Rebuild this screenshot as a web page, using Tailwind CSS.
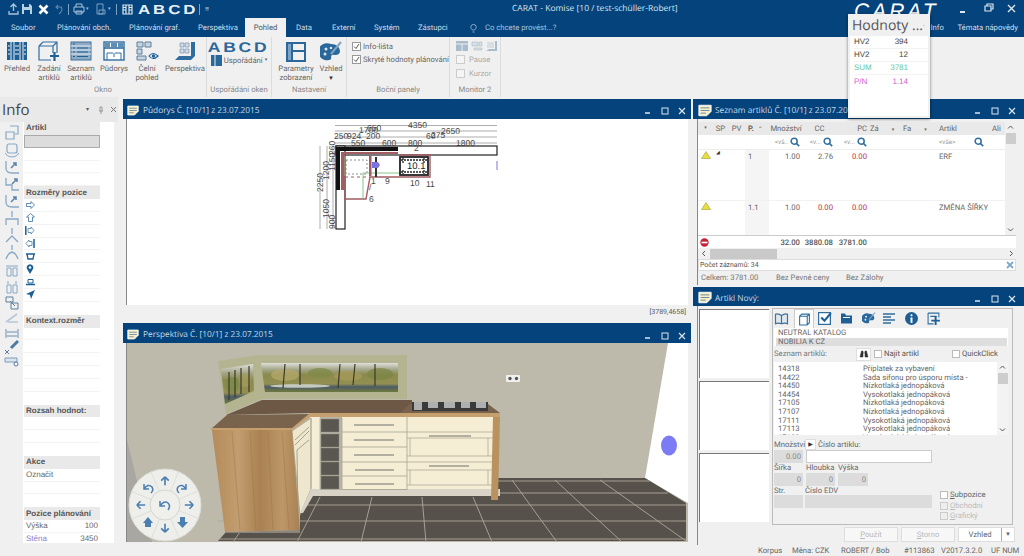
<!DOCTYPE html>
<html lang="en">
<head>
  <meta charset="UTF-8">
  <script src="https://cdn.jsdelivr.net/npm/@tailwindcss/browser@4"></script>
  <title>CARAT - Komise</title>
</head>
<body class="bg-[#f0f0f0] font-['Roboto',sans-serif] text-[#5c5c5c] text-[7.7px] leading-none overflow-hidden [text-rendering:geometricPrecision]">
<svg width="0" height="0" class="absolute">
  <defs>
    <symbol id="arr" viewBox="-6 -6 12 12"><path d="M0 -5 L4.5 -0.5 M0 -5 L-4.5 -0.5 M0 -5 V5" fill="none" stroke="#4b7fb2" stroke-width="2"/></symbol>
    <symbol id="mag" viewBox="0 0 12 12"><circle cx="5" cy="5" r="3.6" fill="none" stroke="#2e6ea3" stroke-width="1.8"/><path d="M7.5 7.5 L11 11" stroke="#2e6ea3" stroke-width="2"/></symbol>
    <symbol id="win" viewBox="0 0 16 14"><path d="M1 1 H15 V8 L10 13 H1Z" fill="#f6efc9" stroke="#fff"/><path d="M3 4 H13 M3 7 H13 M3 10 H9" stroke="#5a7ea0"/></symbol>
    <symbol id="lcurve" viewBox="0 0 16 16"><path d="M2 2 V9 Q2 14 8 14 H15" fill="none" stroke="#8aa8c6" stroke-width="1.3"/><path d="M7 9 L12 4 M9 4 H12 V7" fill="none" stroke="#5d83a8" stroke-width="1.5"/></symbol>
  </defs>
</svg>
<div class="w-[1024px] h-[556px] flex flex-col relative overflow-hidden">

  <!-- title bar -->
  <div class="h-[18px] bg-[#04437b] flex items-center relative text-white">
    <svg width="11" height="12" viewBox="0 0 11 12" class="ml-[8px]"><path d="M5.5 8 V1 M2.5 4 L5.5 1 L8.5 4 M1 8 V11 H10 V8" fill="none" stroke="#a9c4dc" stroke-width="1.3"/></svg>
    <svg width="12" height="12" viewBox="0 0 12 12" class="ml-[2px]"><path d="M1 1 H9 L11 3 V11 H1Z" fill="#b9cfe2"/><path d="M3 1 H8 V4 H3Z M3 7 H9 V11 H3Z" fill="#04437b"/></svg>
    <svg width="11" height="11" viewBox="0 0 11 11" class="ml-[5px]"><path d="M1.5 1.5 L9.5 9.5 M9.5 1.5 L1.5 9.5" stroke="#fff" stroke-width="2.6"/></svg>
    <svg width="9" height="11" viewBox="0 0 9 11" class="ml-[6px]"><path d="M1 3 H6 Q8 5 6 8 L4 10 M3 1 L1 3 L3 5" fill="none" stroke="#5d86ab" stroke-width="1.1"/></svg>
    <div class="w-px h-[11px] bg-[#7fa0bf] ml-[4px]"></div>
    <svg width="12" height="12" viewBox="0 0 12 12" class="ml-[4px]"><path d="M3 4 V1 H9 V4 M1 4 H11 V9 H1Z M3 8 H9 V11 H3Z" fill="none" stroke="#a9c4dc"/></svg>
    <span class="text-[#a9c4dc] text-[5px] ml-[1px] w-[4px]">▾</span>
    <svg width="11" height="12" viewBox="0 0 11 12" class="ml-[5px]"><path d="M2 1 H8 V11 H2Z M4 7 H10 V11 H4Z" fill="none" stroke="#7fa0bf"/></svg>
    <span class="text-[#a9c4dc] text-[5px] ml-[2px] w-[4px]">▾</span>
    <div class="w-px h-[11px] bg-[#7fa0bf] ml-[4px]"></div>
    <svg width="11" height="11" viewBox="0 0 11 11" class="ml-[5px]"><path d="M1 1 H10 V10 H1Z M4 1 V10 M7 1 V10 M1 3.5 H4 M1 6 H4 M7 3.5 H10 M7 6 H10" fill="none" stroke="#dbe6ef" stroke-width="1.2"/></svg>
    <span class="font-['Liberation_Sans',sans-serif] font-bold text-[13px] tracking-[2.2px] text-[#e8f0f6] ml-[5px] scale-x-[1.3] origin-left w-[57px]">ABCD</span>
    <div class="w-px h-[11px] bg-[#7fa0bf] ml-[4px]"></div>
    <span class="text-[#c4d6e6] text-[7px] ml-[5px]">≡</span>
    <span class="absolute left-[512px] top-[5px] font-['Open_Sans',sans-serif] text-[#dbe6ef] text-[8.5px]">CARAT - Komise [10 / test-schüller-Robert]</span>
    <span class="absolute left-[854px] top-[1px] italic font-['Liberation_Sans',sans-serif] text-[21px] tracking-[3px]">CARAT</span>
    <svg width="70" height="14" viewBox="0 0 70 14" class="absolute left-[956px] top-[2px]">
      <path d="M4 10 H9" stroke="#dbe6ef" stroke-width="2"/>
      <path d="M29 4 H35 V9 H29Z M31 4 V2 H37 V7 H35" fill="none" stroke="#dbe6ef" stroke-width="1.2"/>
      <path d="M52 3 L59 10 M59 3 L52 10" stroke="#dbe6ef" stroke-width="1.4"/>
    </svg>
  </div>

  <!-- tabs -->
  <div class="h-[19px] bg-[#04437b] flex items-center text-[#cfdeeb] whitespace-nowrap">
    <span class="ml-[11px] w-[46px]">Soubor</span>
    <span class="w-[72px]">Plánování obch.</span>
    <span class="w-[69px]">Plánování graf.</span>
    <span class="w-[47px]">Perspektiva</span>
    <span class="w-[41px] h-full bg-[#f0f0f0] text-[#555] flex items-center justify-center">Pohled</span>
    <span class="ml-[10px] w-[36px]">Data</span>
    <span class="w-[42px]">Externí</span>
    <span class="w-[44px]">Systém</span>
    <span class="w-[52px]">Zástupci</span>
    <svg width="7" height="10" viewBox="0 0 7 10"><path d="M2.5 7 Q0.5 5.5 0.8 3.5 A2.8 2.8 0 0 1 6.2 3.5 Q6.5 5.5 4.5 7 Z M2.5 9 H4.5" fill="none" stroke="#a9c4dc" stroke-width="0.8"/></svg>
    <span class="ml-[8px] text-[#a9c4dc]">Co chcete provést...?</span>
    <div class="ml-auto mr-[6px] flex items-center">
      <svg width="6" height="4" viewBox="0 0 6 4" class="mr-[2px]"><path d="M0.5 3.5 L3 1 L5.5 3.5" fill="none" stroke="#dbe6ef"/></svg>
      <span class="w-[27px]">Info</span>
      <span>Témata nápovědy</span>
    </div>
  </div>

  <!-- ribbon -->
  <div class="h-[60px] bg-[#f0f0f0] flex relative text-[#666] whitespace-nowrap">
    <!-- Okno -->
    <div class="w-[207px] border-r border-[#dcdcdc] flex flex-col">
      <div class="flex h-[50px] text-center leading-[9px]">
        <div class="w-[34px] flex flex-col items-center pt-[4px]">
          <svg width="22" height="20" viewBox="0 0 22 20"><rect x="1" y="1" width="20" height="18" fill="#1e5f95"/><path d="M5 1 V19 M8 1 V19 M14 1 V19 M17 1 V19" stroke="#f0f0f0"/><path d="M2 5 H4 M2 9 H4 M2 13 H4 M9 5 H13 M9 9 H13 M9 13 H13 M18 5 H20 M18 9 H20 M18 13 H20" stroke="#f0f0f0"/></svg>
          <span class="mt-[3px]">Přehled</span>
        </div>
        <div class="w-[30px] flex flex-col items-center pt-[4px]">
          <svg width="22" height="21" viewBox="0 0 22 21"><path d="M1 5 L5 1 H19 V12 M1 5 V19 H13 M1 5 H15 V12 M15 5 L19 1" fill="none" stroke="#2f6d9f" stroke-width="1.2"/><path d="M12 15 H21 M16.5 11 V20" stroke="#1e5f95" stroke-width="2.2"/></svg>
          <span class="mt-[2px]">Zadání<br>artiklů</span>
        </div>
        <div class="w-[34px] flex flex-col items-center pt-[4px]">
          <svg width="22" height="20" viewBox="0 0 22 20"><rect x="1" y="1" width="20" height="18" fill="#8eabc4" stroke="#3f7199"/><path d="M1 5 H21 M1 9 H21 M1 13 H21" stroke="#e6edf2"/><path d="M3 3 H5 M3 7 H5 M3 11 H5 M3 15.5 H5 M7 7 H18 M7 11 H18 M7 15.5 H18" stroke="#1e5f95"/></svg>
          <span class="mt-[3px]">Seznam<br>artiklů</span>
        </div>
        <div class="w-[32px] flex flex-col items-center pt-[4px]">
          <svg width="22" height="20" viewBox="0 0 22 20"><rect x="1" y="1" width="20" height="18" fill="#fff" stroke="#2f6d9f" stroke-width="1.4"/><path d="M1 7 H21" stroke="#2f6d9f" stroke-width="1.6"/><path d="M2 2 H7 V6 H2Z M8 2 H14 V6 H8Z M15 2 H20 V6 H15Z" fill="#5d8fb7"/><path d="M4 19 V12 H10 M18 19 V12 H12 M11 12 V16" stroke="#2f6d9f" fill="none"/></svg>
          <span class="mt-[3px]">Půdorys</span>
        </div>
        <div class="w-[34px] flex flex-col items-center pt-[4px]">
          <svg width="24" height="20" viewBox="0 0 24 20"><path d="M2 1 H8 V6 H2Z M10 1 H16 V6 H10Z M2 8 H7 V13 H2Z M2 15 H11 V19 H2Z" fill="#c7d5e0" stroke="#5c7e9c"/><path d="M14 15 Q18 10 23 15 Q18 20 14 15Z" fill="#fff" stroke="#1e5f95" stroke-width="1.2"/><circle cx="18.5" cy="15" r="1.8" fill="#1e5f95"/></svg>
          <span class="mt-[3px]">Čelní<br>pohled</span>
        </div>
        <div class="flex-1 flex flex-col items-center pt-[4px]">
          <svg width="22" height="21" viewBox="0 0 22 21"><path d="M1 19 L5 15 H17 V1 H21 V15 L17 19Z" fill="#2f6d9f"/><path d="M6 2 H10 V6 H6Z M11 2 H15 V6 H11Z M6 8 H10 V12 H6Z M11 8 H15 V12 H11Z" fill="#cfdbe5" stroke="#6b8aa6" stroke-width="0.6"/></svg>
          <span class="mt-[2px]">Perspektiva</span>
        </div>
      </div>
      <div class="text-center text-[#888] -mt-[1px]">Okno</div>
    </div>
    <!-- Uspořádání oken -->
    <div class="w-[65px] border-r border-[#dcdcdc] flex flex-col items-center">
      <div class="h-[50px] w-full flex flex-col items-center">
        <div class="font-['Liberation_Sans',sans-serif] font-bold text-[14px] tracking-[2.2px] text-[#2a679a] mt-[3px] scale-x-[1.25]">ABCD</div>
        <div class="flex items-center gap-[2px] mt-[1px]">
          <svg width="11" height="11" viewBox="0 0 11 11"><path d="M0 0 H11 V11 H0Z" fill="#2a679a"/><path d="M4 0 V11" stroke="#f0f0f0"/></svg>
          <span>Uspořádání</span><span class="text-[5px]">▾</span>
        </div>
      </div>
      <div class="text-[#888] -mt-[1px]">Uspořádání oken</div>
    </div>
    <!-- Nastaveni -->
    <div class="w-[75px] border-r border-[#dcdcdc] flex flex-col">
      <div class="flex h-[50px] text-center leading-[9px]">
        <div class="w-[46px] flex flex-col items-center pt-[4px] ml-[1px]">
          <svg width="22" height="22" viewBox="0 0 22 22"><rect x="1" y="1" width="20" height="20" fill="#2a679a"/><path d="M8 3 H19 V9 H8Z M8 11 H19 V19 H8Z" fill="#f0f0f0"/><path d="M3 3 H6 V19 H3Z" fill="#7da4c4"/></svg>
          <span class="mt-[1px]">Parametry<br>zobrazení</span>
        </div>
        <div class="w-[24px] flex flex-col items-center pt-[4px]">
          <svg width="22" height="22" viewBox="0 0 22 22"><path d="M11 3 A9 8.5 0 1 0 9 19 Q12 19 11 16 Q11 13 15 14 Q20 14 20 10 Q19 3 11 3Z" fill="#2a679a"/><circle cx="6" cy="8" r="1.5" fill="#d9e4ec"/><circle cx="5" cy="13" r="1.5" fill="#d9e4ec"/><circle cx="11" cy="7" r="1.3" fill="#d9e4ec"/><path d="M11 13 L21 1" stroke="#7da4c4" stroke-width="2"/></svg>
          <span class="mt-[1px]">Vzhled</span>
          <span class="text-[6px] text-[#333] mt-[1px]">▼</span>
        </div>
      </div>
      <div class="text-center text-[#888] -mt-[1px]">Nastavení</div>
    </div>
    <!-- Bocni panely -->
    <div class="w-[103px] border-r border-[#dcdcdc] flex flex-col">
      <div class="h-[50px] pl-[5px] pt-[5px] flex flex-col gap-[4px]">
        <div class="flex items-center gap-[1px]">
          <div class="w-[9px] h-[9px] bg-white border border-[#999] flex items-center justify-center"><svg width="7" height="7" viewBox="0 0 7 7"><path d="M1 3.5 L3 5.5 L6 1" fill="none" stroke="#555"/></svg></div>
          <span class="ml-[1px]">Info-lišta</span>
        </div>
        <div class="flex items-center gap-[1px]">
          <div class="w-[9px] h-[9px] bg-white border border-[#999] flex items-center justify-center"><svg width="7" height="7" viewBox="0 0 7 7"><path d="M1 3.5 L3 5.5 L6 1" fill="none" stroke="#555"/></svg></div>
          <span class="ml-[1px]">Skryté hodnoty plánování</span>
        </div>
      </div>
      <div class="text-center text-[#888] -mt-[1px]">Boční panely</div>
    </div>
    <!-- Monitor 2 -->
    <div class="w-[51px] border-r border-[#dcdcdc] flex flex-col">
      <div class="h-[50px] pl-[6px] pt-[4px]">
        <div class="flex gap-[3px]">
          <svg width="12" height="10" viewBox="0 0 12 10"><rect width="12" height="10" fill="#a9bccb"/><path d="M0 3 H12 M6 3 V10" stroke="#eee"/></svg>
          <svg width="12" height="10" viewBox="0 0 12 10"><path d="M1 1 H7 V5 H1Z M8 1 H11 V5 H8Z M3 7 H11 V9 H3Z" fill="#d7dfe5" stroke="#a9bccb" stroke-width="0.6"/></svg>
          <svg width="12" height="10" viewBox="0 0 12 10"><path d="M11 0 V10 H0 L3 8 H9 V0Z" fill="#a9bccb"/><path d="M1 1 H8 V7 H1Z" fill="#d7dfe5"/></svg>
        </div>
        <div class="flex items-center gap-[4px] mt-[4px] text-[#aaa]"><div class="w-[9px] h-[9px] bg-[#f5f5f5] border border-[#ccc]"></div>Pause</div>
        <div class="flex items-center gap-[4px] mt-[5px] text-[#aaa]"><div class="w-[9px] h-[9px] bg-[#f5f5f5] border border-[#ccc]"></div>Kurzor</div>
      </div>
      <div class="text-center text-[#888] -mt-[1px]">Monitor 2</div>
    </div>
  </div>

  <!-- workspace -->
  <div class="h-[448px] flex bg-[#f0f0f0]">

    <!-- info panel -->
    <div class="w-[122px] flex flex-col shrink-0">
      <div class="h-[25px] flex items-center pl-[2px] bg-[#e9e9e9] mr-[4px]">
        <span class="text-[15px] text-[#444] font-['Open_Sans',sans-serif] mt-[1px] w-[84px]">Info</span>
        <span class="text-[6px] w-[12px]">▾</span>
        <svg width="6" height="8" viewBox="0 0 6 8" class="mr-[6px]"><path d="M3 8 V5 M1 5 H5 M2 5 V1 H4 V5" fill="none" stroke="#888" stroke-width="0.8"/></svg>
        <svg width="7" height="7" viewBox="0 0 7 7"><path d="M1 1 L6 6 M6 1 L1 6" stroke="#777"/></svg>
      </div>
      <div class="flex h-[421px] overflow-hidden">
        <div class="w-[23px] flex flex-col items-center gap-[1px] pt-[3px] shrink-0">
          <svg width="16" height="16" viewBox="0 0 16 16"><path d="M6 1 H14 V9 H11 M2 7 H10 V14 H2Z" fill="none" stroke="#8aa8c6" stroke-width="1.2"/></svg>
          <svg width="16" height="16" viewBox="0 0 16 16"><rect x="3" y="2" width="10" height="9" rx="2" fill="none" stroke="#8aa8c6" stroke-width="1.2"/><path d="M1 11 Q3 15 8 15 Q13 15 15 11" fill="none" stroke="#8aa8c6"/></svg>
          <svg width="16" height="16"><use href="#lcurve"/></svg>
          <svg width="16" height="16" viewBox="0 0 16 16"><path d="M2 2 V9 H8 V14 H15" fill="none" stroke="#8aa8c6" stroke-width="1.3"/><path d="M8 8 L13 3 M10 3 H13 V6" fill="none" stroke="#5d83a8" stroke-width="1.5"/></svg>
          <svg width="16" height="16"><use href="#lcurve"/></svg>
          <svg width="16" height="16" viewBox="0 0 16 16"><path d="M8 1 V7 M2 15 V9 H14 V15" fill="none" stroke="#8aa8c6" stroke-width="1.3"/></svg>
          <svg width="16" height="16" viewBox="0 0 16 16"><path d="M8 1 V7 M2 15 L8 9 L14 15" fill="none" stroke="#8aa8c6" stroke-width="1.3"/></svg>
          <svg width="16" height="16" viewBox="0 0 16 16"><path d="M8 1 V6 M2 15 Q4 9 8 8 Q12 9 14 15" fill="none" stroke="#8aa8c6" stroke-width="1.3"/></svg>
          <svg width="16" height="16" viewBox="0 0 16 16"><path d="M2 5 H14 M3 7 H7 V15 H3Z M9 7 H13 V15 H9Z" fill="none" stroke="#8aa8c6"/></svg>
          <svg width="16" height="16" viewBox="0 0 16 16"><path d="M4 3 V6 M12 3 V6 M3 7 H7 V15 H3Z M9 7 H13 V15 H9Z" fill="none" stroke="#8aa8c6"/></svg>
          <svg width="16" height="16" viewBox="0 0 16 16"><path d="M2 2 H9 V7 H2Z M7 8 H14 V14 H7Z M6 6 L11 11" fill="none" stroke="#5c7e9c"/></svg>
          <svg width="16" height="14" viewBox="0 0 16 14"><path d="M2 10 L13 2 M4 10 H14" fill="none" stroke="#b7c7d6" stroke-width="1.6"/></svg>
          <svg width="16" height="12" viewBox="0 0 16 12"><path d="M2 2 V11 M14 2 V11 M3 5 H13 M3 9 H13" fill="none" stroke="#6a8eb0"/></svg>
          <svg width="16" height="16" viewBox="0 0 16 16" class="-mt-[1px]"><path d="M1 11 L5 15 M5 11 L1 15" stroke="#5c7e9c"/><path d="M7 9 L14 2" stroke="#4e7ba5" stroke-width="3"/></svg>
          <svg width="16" height="12" viewBox="0 0 16 12"><path d="M1 2 H13 V6 H1Z" fill="#dce5ec" stroke="#7d9cbc"/><circle cx="12" cy="8" r="2" fill="#fff" stroke="#4e7ba5"/></svg>
        </div>
        <div class="w-[91px] bg-white text-[#666] font-['Liberation_Sans',sans-serif] text-[8px]">
          <div class="w-[76px] ml-[1px]">
            <div class="h-[12.85px] bg-[#e9e9e9] font-bold flex items-center pl-[2px] text-[#555]">Artikl</div>
            <div class="h-[12.85px] bg-[#dcdcdc] border border-[#aaa]"></div>
            <div class="h-[12.85px] border-b border-[#f3f3f3]"></div>
            <div class="h-[12.85px] border-b border-[#f3f3f3]"></div>
            <div class="h-[12.85px] border-b border-[#f3f3f3]"></div>
            <div class="h-[12.85px] bg-[#e9e9e9] font-bold flex items-center pl-[2px] text-[#555]">Rozměry pozice</div>
            <div class="h-[12.85px] border-b border-[#f3f3f3] flex items-center pl-[2px]"><svg width="9" height="8" viewBox="0 0 9 8"><path d="M0.5 2.5 H5 V0.5 L8.5 4 L5 7.5 V5.5 H0.5Z" fill="#fff" stroke="#3b6f9e" stroke-width="0.8"/></svg></div>
            <div class="h-[12.85px] border-b border-[#f3f3f3] flex items-center pl-[2px]"><svg width="9" height="9" viewBox="0 0 9 9"><path d="M2.5 8.5 V4 H0.5 L4.5 0.5 L8.5 4 H6.5 V8.5Z" fill="#fff" stroke="#3b6f9e" stroke-width="0.8"/></svg></div>
            <div class="h-[12.85px] border-b border-[#f3f3f3] flex items-center pl-[1px]"><svg width="10" height="9" viewBox="0 0 10 9"><path d="M0.8 0 V9" stroke="#1e5f95" stroke-width="1.5"/><path d="M3 2.5 H6 V1 L9 4.5 L6 8 V6.5 H3Z" fill="#fff" stroke="#3b6f9e" stroke-width="0.7"/></svg></div>
            <div class="h-[12.85px] border-b border-[#f3f3f3] flex items-center pl-[1px]"><svg width="10" height="9" viewBox="0 0 10 9"><path d="M9 0 V9" stroke="#1e5f95" stroke-width="1.5"/><path d="M7 2.5 H4 V1 L1 4.5 L4 8 V6.5 H7Z" fill="#fff" stroke="#3b6f9e" stroke-width="0.7"/></svg></div>
            <div class="h-[12.85px] border-b border-[#f3f3f3] flex items-center pl-[2px]"><svg width="9" height="7" viewBox="0 0 9 7"><path d="M0 1 H9 M1 1 L2 6 H7 L8 1" fill="none" stroke="#1e5f95" stroke-width="1.3"/></svg></div>
            <div class="h-[12.85px] border-b border-[#f3f3f3] flex items-center pl-[2px]"><svg width="8" height="10" viewBox="0 0 8 10"><path d="M4 10 L1 5 A3.3 3.3 0 1 1 7 5Z" fill="#1e5f95"/><circle cx="4" cy="3.5" r="1.3" fill="#fff"/></svg></div>
            <div class="h-[12.85px] border-b border-[#f3f3f3] flex items-center pl-[2px]"><svg width="9" height="7" viewBox="0 0 9 7"><path d="M2 0.5 H7 V4 H2Z" fill="none" stroke="#1e5f95"/><path d="M0 5.5 H9" stroke="#1e5f95" stroke-width="1.5"/></svg></div>
            <div class="h-[12.85px] border-b border-[#f3f3f3] flex items-center pl-[2px]"><svg width="9" height="9" viewBox="0 0 9 9"><path d="M9 0 L0 4 L4 5 L5 9Z" fill="#1e5f95"/></svg></div>
            <div class="h-[12.85px]"></div>
            <div class="h-[12.85px] bg-[#e9e9e9] font-bold flex items-center pl-[2px] text-[#555]">Kontext.rozměr</div>
            <div class="h-[12.85px] border-b border-[#f3f3f3]"></div><div class="h-[12.85px] border-b border-[#f3f3f3]"></div><div class="h-[12.85px] border-b border-[#f3f3f3]"></div><div class="h-[12.85px] border-b border-[#f3f3f3]"></div><div class="h-[12.85px] border-b border-[#f3f3f3]"></div><div class="h-[12.85px]"></div>
            <div class="h-[12.85px] bg-[#e9e9e9] font-bold flex items-center pl-[2px] text-[#555]">Rozsah hodnot:</div>
            <div class="h-[12.85px] border-b border-[#f3f3f3]"></div><div class="h-[12.85px] border-b border-[#f3f3f3]"></div><div class="h-[12.85px]"></div>
            <div class="h-[12.85px] bg-[#e9e9e9] font-bold flex items-center pl-[2px] text-[#555]">Akce</div>
            <div class="h-[12.85px] border-b border-[#f3f3f3] flex items-center pl-[2px]">Označit</div>
            <div class="h-[12.85px] border-b border-[#f3f3f3]"></div><div class="h-[12.85px]"></div>
            <div class="h-[12.85px] bg-[#e9e9e9] font-bold flex items-center pl-[2px] text-[#555]">Pozice plánování</div>
            <div class="h-[12.85px] border-b border-[#f3f3f3] flex items-center justify-between px-[2px]"><span>Výška</span><span>100</span></div>
            <div class="h-[12.85px] flex items-center justify-between px-[2px]"><span class="text-[#8a80c8]">Stěna</span><span>3450</span></div>
          </div>
        </div>
      </div>
    </div>

    <!-- middle windows -->
    <div class="w-[568px] ml-[1px] flex flex-col pt-[2px] shrink-0">
      <div class="h-[221px] flex flex-col">
        <div class="h-[20px] bg-[#04437b] flex items-center text-[#c6d8e7] pl-[4px] font-['Open_Sans',sans-serif] text-[8.3px]">
          <svg width="12" height="11" class="mt-[3px]"><use href="#win"/></svg>
          <span class="ml-[4px] pt-[4px]">Půdorys Č. [10/1] z 23.07.2015</span>
          <div class="ml-auto flex items-center gap-[9px] pr-[5px] pt-[4px]">
            <svg width="8" height="8" viewBox="0 0 8 8"><path d="M1 6 H6" stroke="#dbe6ef" stroke-width="1.5"/></svg>
            <svg width="8" height="8" viewBox="0 0 8 8"><rect x="1" y="1" width="6" height="6" fill="none" stroke="#dbe6ef"/></svg>
            <svg width="8" height="8" viewBox="0 0 8 8"><path d="M1 1 L7 7 M7 1 L1 7" stroke="#dbe6ef" stroke-width="1.2"/></svg>
          </div>
        </div>
        <div class="flex-1 pl-[3px] pr-[3px] flex flex-col">
          <div class="h-[186px] bg-white border-l border-[#888] relative overflow-hidden">
            <svg class="absolute left-0 top-0" width="561" height="186" viewBox="127 119 561 186" font-family="Liberation Sans, sans-serif" font-size="8.5" fill="#444">
              <path d="M335 125.5 H497 M335 131 H497 M335 137 H497 M335 143 H497" stroke="#777" stroke-width="0.6"/>
              <g>
                <text x="408" y="128">4350</text><text x="359" y="133">1700</text><text x="367" y="131">650</text><text x="441" y="134">2650</text>
                <text x="334" y="139">250</text><text x="347" y="139">924</text><text x="366" y="139">200</text><text x="426" y="139">60</text><text x="431" y="138">275</text>
                <text x="351" y="146">550</text><text x="382" y="146">600</text><text x="408" y="146">800</text><text x="456" y="146">1800</text>
              </g>
              <path d="M320 146 V229 M327 146 V229 M333 146 V229" stroke="#777" stroke-width="0.6"/>
              <text transform="translate(323 192) rotate(-90)">2250</text>
              <text transform="translate(329 180) rotate(-90)">1200</text>
              <text transform="translate(335 171) rotate(-90)">1150</text>
              <text transform="translate(335 155) rotate(-90)">260</text>
              <text transform="translate(329 218) rotate(-90)">1050</text>
              <text transform="translate(335 229) rotate(-90)">900</text>
              <rect x="336" y="146" width="161" height="9" fill="#fff" stroke="#222" stroke-width="1.2"/>
              <rect x="336" y="146" width="9" height="83" fill="#fff" stroke="#222" stroke-width="1.2"/>
              <rect x="336" y="147" width="62" height="4" fill="#111"/>
              <rect x="336" y="147" width="4" height="43" fill="#111"/>
              <rect x="341" y="152" width="3.500" height="38" fill="#a25c62"/>
              <path d="M345 153 H398" stroke="#a25c62" stroke-width="2"/>
              <path d="M345 153 V199 H366 L370 177 H430 V155 H400" fill="none" stroke="#a25c62" stroke-width="1.4"/>
              <path d="M345 177 H370" stroke="#a25c62" stroke-dasharray="3 3"/>
              <rect x="346" y="160" width="21" height="14" fill="none" stroke="#444" stroke-width="0.6" stroke-dasharray="2 2"/>
              <path d="M345 156 V176 M363 198 V173 H428" fill="none" stroke="#7ac07a" stroke-width="0.9"/>
              <rect x="369" y="156" width="2.500" height="20" fill="#a25c62"/>
              <rect x="375" y="157" width="2" height="20" fill="#333"/>
              <path d="M372 162 H378 L380 165 L378 168 H372Z" fill="#7a74e0"/>
              <rect x="400" y="157" width="28" height="18" fill="#fff" stroke="#222" stroke-width="1.800"/>
              <path d="M401 160 H427 M401 172 H427 M403 158 V163 M424 158 V163 M403 170 V174 M424 170 V174" stroke="#222" fill="none" stroke-width="1.300" stroke-dasharray="2 1"/>
              <text x="407" y="168.500" font-size="9.500" fill="#222">10.1</text>
              <text x="371" y="184">1</text><text x="385" y="184">9</text><text x="410" y="186">10</text><text x="426" y="187">11</text><text x="369" y="202">6</text><text x="414" y="151">2</text><text x="369" y="190">/</text>
              <path d="M497 161 V170" stroke="#7a74e0"/>
            </svg>
          </div>
          <div class="h-[15px] flex items-center justify-end pr-[2px] text-[7px]">[3789,4658]</div>
        </div>
      </div>

      <div class="h-[222px] mt-[3px] flex flex-col">
        <div class="h-[20px] bg-[#04437b] flex items-center text-[#c6d8e7] pl-[4px] font-['Open_Sans',sans-serif] text-[8.3px]">
          <svg width="12" height="11" class="mt-[3px]"><use href="#win"/></svg>
          <span class="ml-[4px] pt-[5px]">Perspektiva Č. [10/1] z 23.07.2015</span>
          <div class="ml-auto flex items-center gap-[9px] pr-[5px] pt-[5px]">
            <svg width="8" height="8" viewBox="0 0 8 8"><path d="M1 6 H6" stroke="#dbe6ef" stroke-width="1.5"/></svg>
            <svg width="8" height="8" viewBox="0 0 8 8"><rect x="1" y="1" width="6" height="6" fill="none" stroke="#dbe6ef"/></svg>
            <svg width="8" height="8" viewBox="0 0 8 8"><path d="M1 1 L7 7 M7 1 L1 7" stroke="#dbe6ef" stroke-width="1.2"/></svg>
          </div>
        </div>
        <div class="pl-[3px] pr-[3px]">
          <div class="h-[199px] border-l border-[#888] relative overflow-hidden">
            <svg class="absolute left-0 top-0" width="561" height="199" viewBox="127 343 561 199">
              <defs>
                <linearGradient id="oak" x1="0" x2="1" y1="0" y2="0"><stop offset="0" stop-color="#b48b5b"/><stop offset="0.3" stop-color="#c29d6f"/><stop offset="0.55" stop-color="#a98152"/><stop offset="0.8" stop-color="#bd9768"/><stop offset="1" stop-color="#a88052"/></linearGradient>
                <linearGradient id="pic" x1="0" x2="0" y1="0" y2="1"><stop offset="0" stop-color="#dedfd8"/><stop offset="0.22" stop-color="#a5a78c"/><stop offset="0.4" stop-color="#8a8a4c"/><stop offset="0.72" stop-color="#938f52"/><stop offset="0.82" stop-color="#4c5b66"/><stop offset="1" stop-color="#6f7a3c"/></linearGradient>
              </defs>
              <rect x="127" y="343" width="561" height="199" fill="#bdb9ab"/>
              <path d="M668 343 H688 V503 L645 478Z" fill="#fff"/>
              <path d="M127 440 L152 542 H127Z" fill="#a9a7a1"/>
              <path d="M300 478 H645 L686 503 V541 H218 L226 532 H300Z" fill="#56514a"/>
              <path d="M300 481 H650 M300 493 H668 M300 505 H686 M218 521 H686 M218 539 H686" stroke="#aea89c" stroke-width="0.9"/>
              <path d="M512 480 L557 542 M555 480 L622 542 M600 480 L686 541 M473 497 L492 542 M422 497 L426 542 M372 497 L361 542 M320 497 L297 542 M240 532 L233 542" stroke="#aea89c" stroke-width="0.9"/>
              <!-- backsplash -->
              <path d="M218 361 L260 355 H407 V399 H262 L226 414 Z" fill="#b4b590"/>
              <path d="M221 369 L253 364 L254 391 L225 404Z" fill="url(#pic)"/>
              <path d="M261 363 H398 V392 H265Z" fill="url(#pic)"/>
              <g opacity="0.75">
                <ellipse cx="285" cy="375" rx="14" ry="6" fill="#b5a86a"/><ellipse cx="320" cy="373" rx="12" ry="5" fill="#7e8a46"/><ellipse cx="348" cy="376" rx="14" ry="5" fill="#a89a5c"/><ellipse cx="380" cy="374" rx="13" ry="6" fill="#7c8644"/>
                <ellipse cx="300" cy="386" rx="30" ry="1.800" fill="#e6e8e2"/><ellipse cx="232" cy="385" rx="7" ry="8" fill="#7b8a4a"/><ellipse cx="245" cy="380" rx="6" ry="7" fill="#a59c60"/>
              </g>
              <path d="M229 372 V400 M235 370 V397 M241 368 V394 M249 366 V392 M285 364 L283 388 M300 364 V385 M340 364 L338 388 M355 364 L353 385 M375 364 V386" stroke="#3d3a27" stroke-width="1.200"/>
              <!-- counters -->
              <path d="M226 415 L262 400 H412 V413 H310 L226 415Z" fill="#6c5845"/>
              <path d="M211 429 L227 415 L310 414 L292 429Z" fill="#7a634c"/>
              <path d="M310 413 H500 V417 H310 L292 430 H211 V428 H292Z" fill="#c5a06e"/>
              <!-- cabinets -->
              <rect x="310" y="417" width="183" height="73" fill="#f6eed4"/>
              <path d="M292 431 L311 418 V489 L300 515Z" fill="#efe7cd" stroke="#9d9a88" stroke-width="0.7"/>
              <path d="M295 440 L309 427 M295 445 L309 431 M297 450 L309 440 M298 515 L297 450" stroke="#9d9a88" fill="none" stroke-width="0.9"/>
              <path d="M311 489 H500 V496 H313 L303 513 H300Z" fill="#d8d3c6"/>
              <path d="M311 418 V489 M320 418 V489" stroke="#a5a292" stroke-width="0.7"/>
              <rect x="320" y="417" width="22" height="73" fill="#b9b6a8"/>
              <g fill="#5a5751" stroke="#8d8a7d" stroke-width="0.500">
                <rect x="321" y="419" width="18" height="13"/><rect x="321" y="434" width="18" height="13"/><rect x="321" y="448" width="18" height="13"/><rect x="321" y="462" width="18" height="13"/><rect x="321" y="476" width="18" height="13"/>
              </g>
              <path d="M342 418 V489 M407 417 V490 M342 432 H407 M342 447 H407 M342 462 H407 M342 476 H407 M342 489.500 H407" stroke="#a5a292" stroke-width="0.800"/>
              <path d="M354 425 H394 M354 440 H394 M354 455 H394 M355 470 H394 M355 484 H394" stroke="#9c9a8e" stroke-width="1.400"/>
              <path d="M407 432 H493 M407 438 H493 M407 456 H493 M407 462 H493 M407 470 H493 M407 485 H493 M410 438 V456 M488 438 V456 M410 470 V485 M488 470 V485" stroke="#a5a292" stroke-width="0.700"/>
              <path d="M429 436 H471 M429 466 H469" stroke="#9c9a8e" stroke-width="1.400"/>
              <path d="M493 417 H500 L498 500 L491 500Z" fill="#b9925f"/>
              <path d="M410 404 H488 L500 413 H400Z" fill="#7a634c"/>
              <rect x="412" y="402" width="76" height="9" fill="#3a3a3a"/>
              <path d="M414 402 H422 V410 H414Z M428 402 H438 V408 H428Z M444 402 H455 V408 H444Z M461 402 H470 V408 H461Z M476 402 H486 V408 H476Z" fill="#aeb0b0"/>
              <!-- oak side panel -->
              <path d="M212 430 H292 L300 530 L225 532Z" fill="url(#oak)"/>
              <path d="M232 431 L240 530 M250 431 L256 531 M268 431 L273 530 M282 431 L289 530" stroke="#9a7448" stroke-width="0.600" opacity="0.700"/>
              <path d="M225 532 L300 530 L300 533 H226Z" fill="#8b8478"/>
              <!-- socket -->
              <rect x="506" y="375" width="14" height="7" rx="1" fill="#f0f0ee"/>
              <circle cx="510" cy="378.500" r="1.700" fill="#555"/><circle cx="516.500" cy="378.500" r="1.700" fill="#555"/>
              <ellipse cx="669" cy="445.500" rx="8" ry="10" fill="#7b7bf5"/>
              <!-- wheel -->
              <circle cx="165" cy="505" r="36" fill="#eeeeea" stroke="#dcdcd8"/>
              <circle cx="165" cy="505" r="15" fill="#efefeb" stroke="#d4d4d0"/>
              <path d="M165 469 V490 M165 520 V541 M129 505 H150 M180 505 H201 M140 480 L154 494 M176 516 L190 530 M190 480 L176 494 M154 516 L140 530" stroke="#d9d9d5" stroke-width="0.700" transform="rotate(22 165 505)"/>
              <use href="#arr" x="160" y="476" width="10" height="10"/>
              <use href="#arr" x="0" y="0" width="10" height="10" transform="translate(170 533) rotate(180)"/>
              <use href="#arr" x="0" y="0" width="10" height="10" transform="translate(136 510) rotate(-90)"/>
              <use href="#arr" x="0" y="0" width="10" height="10" transform="translate(194 500) rotate(90)"/>
              <path d="M144 484 V489 H149 M144 489 Q148 483 152 487 Q154 490 151 493" fill="none" stroke="#4b7fb2" stroke-width="1.500"/>
              <path d="M186 484 V489 H181 M186 489 Q182 483 178 487 Q176 490 179 493" fill="none" stroke="#4b7fb2" stroke-width="1.500"/>
              <path d="M160 501 V506 H165 M160 506 Q164 500 168 503 Q171 506 168 510" fill="none" stroke="#4b7fb2" stroke-width="1.500"/>
              <path d="M145 527 V523 H143 L148 517 L153 523 H151 V527Z" fill="#4b7fb2"/>
              <path d="M180 517 H185 V522 H188 L182.500 528 L177 522 H180Z" fill="#4b7fb2"/>
            </svg>
          </div>
        </div>
      </div>
    </div>

    <!-- right windows -->
    <div class="w-[331px] ml-[2px] flex flex-col pt-[2px]">
      <div class="h-[186px] flex flex-col">
        <div class="h-[20px] bg-[#04437b] flex items-center text-[#c6d8e7] pl-[5px] font-['Open_Sans',sans-serif] text-[8.3px]">
          <svg width="14" height="13" class="mt-[3px]"><use href="#win"/></svg>
          <span class="ml-[3px] pt-[4px]">Seznam artiklů Č. [10/1] z 23.07.2015</span>
          <div class="ml-auto flex items-center gap-[9px] pr-[8px] pt-[4px]">
            <svg width="8" height="8" viewBox="0 0 8 8"><path d="M1 6 H6" stroke="#dbe6ef" stroke-width="1.5"/></svg>
            <svg width="8" height="8" viewBox="0 0 8 8"><rect x="1" y="1" width="6" height="6" fill="none" stroke="#dbe6ef"/></svg>
            <svg width="8" height="8" viewBox="0 0 8 8"><path d="M1 1 L7 7 M7 1 L1 7" stroke="#dbe6ef" stroke-width="1.2"/></svg>
          </div>
        </div>
        <div class="flex-1 pl-[4px] pr-[8px] flex flex-col">
          <div class="border-l border-[#888] pt-[3px] bg-[#f0f0f0]">
            <div class="flex h-[113px] bg-white">
              <div class="w-[307px] text-[#666] leading-none shrink-0">
                <div class="grid grid-cols-[15px_15px_17px_24px_34px_33px_34px_33px_33px_56px_13px] h-[13px] bg-[#e9e9e9] items-center">
                  <span class="text-center text-[5px]">▾</span><span class="text-center">SP</span><span class="text-center">PV</span><span class="font-bold pl-[3px]">P. <span class="font-normal text-[6px] pl-[2px]">⌃</span></span><span class="text-center">Množství</span><span class="text-center">CC</span><span class="text-right pr-[3px]">PC</span><span>Zá <span class="text-[5px] pl-[11px]">▾</span></span><span>Fa <span class="text-[5px] pl-[11px]">▾</span></span><span class="pl-[3px]">Artikl</span><span>Ali</span>
                </div>
                <div class="grid grid-cols-[15px_15px_17px_24px_34px_33px_34px_33px_33px_56px_13px] h-[15px] items-center text-[6.500px] text-[#999] border-b border-[#eee]">
                  <span></span><span></span><span></span><span></span>
                  <span class="flex items-center justify-end gap-[2px] pr-[3px]">&lt;vš.. <svg width="10" height="10"><use href="#mag"/></svg></span>
                  <span class="flex items-center justify-end gap-[2px] pr-[3px]">&lt;v... <svg width="10" height="10"><use href="#mag"/></svg></span>
                  <span class="flex items-center justify-end gap-[2px] pr-[3px]">&lt;v... <svg width="10" height="10"><use href="#mag"/></svg></span>
                  <span></span><span></span>
                  <span class="flex items-center justify-between pl-[3px] pr-[8px]">&lt;vše&gt; <svg width="10" height="10"><use href="#mag"/></svg></span>
                  <span></span>
                </div>
                <div class="grid grid-cols-[15px_15px_17px_24px_34px_33px_34px_33px_33px_56px_13px] h-[51px] border-b border-[#f2f2f2]">
                  <span class="pl-[3px] pt-[1px]"><svg width="10" height="8" viewBox="0 0 10 8"><path d="M5 0.500 L9.500 7.500 H0.500Z" fill="#e8df3c" stroke="#8e8a2c" stroke-width="0.500"/></svg></span>
                  <span class="pl-[3px] text-[#333] text-[5px] pt-[1px]">◢</span><span></span>
                  <span class="bg-[#f5f5f5] pl-[3px] pt-[3px]">1</span>
                  <span class="text-right pr-[3px] pt-[3px]">1.00</span><span class="text-right pr-[3px] pt-[3px]">2.76</span><span class="text-right pr-[3px] pt-[3px] text-[#c0323f]">0.00</span><span></span><span></span><span class="pl-[3px] pt-[3px]">ERF</span><span></span>
                </div>
                <div class="grid grid-cols-[15px_15px_17px_24px_34px_33px_34px_33px_33px_56px_13px] h-[34px]">
                  <span class="pl-[3px] pt-[1px]"><svg width="10" height="8" viewBox="0 0 10 8"><path d="M5 0.500 L9.500 7.500 H0.500Z" fill="#e8df3c" stroke="#8e8a2c" stroke-width="0.500"/></svg></span>
                  <span></span><span></span>
                  <span class="bg-[#f5f5f5] pl-[3px] pt-[3px]">1.1</span>
                  <span class="text-right pr-[3px] pt-[3px]">1.00</span><span class="text-right pr-[3px] pt-[3px] text-[#c0323f]">0.00</span><span class="text-right pr-[3px] pt-[3px] text-[#c0323f]">0.00</span><span></span><span></span><span class="pl-[3px] pt-[3px] whitespace-nowrap col-span-2">ZMĚNA ŠÍŘKY</span>
                </div>
              </div>
              <div class="w-[11px] bg-[#f0f0f0] flex flex-col items-center">
                <svg width="7" height="11" viewBox="0 0 7 11"><path d="M1 6.500 L3.500 4 L6 6.500" fill="none" stroke="#555"/></svg>
                <div class="w-[10px] h-[11px] bg-[#cdcdcd]"></div>
                <svg width="7" height="11" viewBox="0 0 7 11" class="mt-auto"><path d="M1 4.500 L3.500 7 L6 4.500" fill="none" stroke="#555"/></svg>
              </div>
            </div>
            <div class="flex h-[13px] bg-white border-t border-[#ccc] items-center text-[#555] font-medium">
              <span class="pl-[2px] w-[71px]"><svg width="9" height="9" viewBox="0 0 9 9"><circle cx="4.500" cy="4.500" r="4.200" fill="#c4243a"/><path d="M1.500 4.500 H7.500" stroke="#fff" stroke-width="1.600"/></svg></span>
              <span class="w-[34px] text-right pr-[3px] pt-[2px]">32.00</span><span class="w-[33px] text-right pr-[3px] pt-[2px]">3880.08</span><span class="w-[34px] text-right pr-[3px] pt-[2px]">3781.00</span>
            </div>
            <div class="flex h-[11px] items-center bg-[#f0f0f0]">
              <svg width="12" height="11" viewBox="0 0 12 11"><path d="M7 3 L4.500 5.500 L7 8" fill="none" stroke="#555"/></svg>
              <div class="w-[67px] h-[10px] bg-[#c9c9c9]"></div>
              <svg width="10" height="11" viewBox="0 0 10 11" class="ml-auto"><path d="M4 3 L6.500 5.500 L4 8" fill="none" stroke="#555"/></svg>
            </div>
            <div class="flex h-[12px] items-center bg-white border border-[#ddd] text-[#555] text-[6.900px] pl-[1px]">
              <span>Počet záznamů: 34</span>
              <svg width="8" height="8" viewBox="0 0 8 8" class="ml-auto mr-[1px]"><path d="M1 1 L7 7 M7 1 L1 7" stroke="#7fa8c8" stroke-width="1.800"/></svg>
            </div>
          </div>
          <div class="h-[14px] flex items-center pl-[3px] text-[#777] border-l border-[#888]">
            <span class="w-[75px]">Celkem: 3781.00</span><span class="w-[70px]">Bez Pevné ceny</span><span>Bez Zálohy</span>
          </div>
        </div>
      </div>

      <div class="h-[258px] mt-[2px] flex flex-col">
        <div class="h-[19px] bg-[#04437b] flex items-center text-[#c6d8e7] pl-[5px] font-['Open_Sans',sans-serif] text-[8.3px]">
          <svg width="14" height="13" class="mt-[1px]"><use href="#win"/></svg>
          <span class="ml-[3px] pt-[5px]">Artikl Nový:</span>
          <div class="ml-auto flex items-center gap-[9px] pr-[8px] pt-[5px]">
            <svg width="8" height="8" viewBox="0 0 8 8"><path d="M1 6 H6" stroke="#dbe6ef" stroke-width="1.5"/></svg>
            <svg width="8" height="8" viewBox="0 0 8 8"><rect x="1" y="1" width="6" height="6" fill="none" stroke="#dbe6ef"/></svg>
            <svg width="8" height="8" viewBox="0 0 8 8"><path d="M1 1 L7 7 M7 1 L1 7" stroke="#dbe6ef" stroke-width="1.2"/></svg>
          </div>
        </div>
        <div class="flex-1 border-l border-[#888] ml-[4px] pt-[3px] flex flex-col">
          <div class="flex h-[216px]">
            <div class="w-[70px] ml-[1px] flex flex-col gap-[3px]">
              <div class="h-[69px] bg-white border-l border-t border-[#777]"></div>
              <div class="h-[69px] bg-white border-l border-t border-[#777]"></div>
              <div class="h-[69px] bg-white border-l border-t border-[#777]"></div>
            </div>
            <div class="w-[241px] ml-[3px] mr-[9px] border border-[#bbb] pl-[1px] -mt-[1px]">
              <div class="h-[19px] flex items-center">
                <svg width="15" height="12" viewBox="0 0 12 10"><path d="M6 2 Q3 0 1 1 V9 Q3 8 6 9 Q9 8 11 9 V1 Q9 0 6 2 V9" fill="#dfe8ef" stroke="#3f7199"/></svg>
                <div class="w-[20px] h-[19px] bg-white border-t border-l border-r border-[#ccc] flex items-center justify-center ml-[5px]">
                  <svg width="13" height="13" viewBox="0 0 11 12"><path d="M1 3 L3 1 H10 V9 L8 11 H1Z M1 3 H8 V11 M8 3 L10 1" fill="#fff" stroke="#2f6d9f"/></svg>
                </div>
                <svg width="14" height="13" viewBox="0 0 13 12" class="ml-[4px]"><rect x="0.500" y="0.500" width="11" height="11" fill="#fff" stroke="#2f6d9f" stroke-width="1.200"/><path d="M3 5 L6 8 L12 1" fill="none" stroke="#1e5f95" stroke-width="2"/></svg>
                <svg width="13" height="13" viewBox="0 0 13 12" class="ml-[8px]"><path d="M1 1 H5 L6 3 H12 V11 H1Z" fill="#1e5f95"/><path d="M3 5 H10" stroke="#fff"/></svg>
                <svg width="14" height="13" viewBox="0 0 22 22" class="ml-[9px]"><path d="M11 3 A9 8.500 0 1 0 9 19 Q12 19 11 16 Q11 13 15 14 Q20 14 20 10 Q19 3 11 3Z" fill="#2a679a"/><circle cx="6" cy="8" r="1.500" fill="#fff"/><circle cx="5" cy="13" r="1.500" fill="#fff"/><path d="M11 13 L21 1" stroke="#7da4c4" stroke-width="2"/></svg>
                <svg width="13" height="12" viewBox="0 0 13 12" class="ml-[7px]"><path d="M0 1 H12 M0 4 H8 M0 7 H12 M0 10 H8" stroke="#2f6d9f" stroke-width="1.300"/></svg>
                <svg width="13" height="13" viewBox="0 0 12 12" class="ml-[9px]"><circle cx="6" cy="6" r="6" fill="#1e5f95"/><path d="M6 5 V10" stroke="#fff" stroke-width="1.800"/><circle cx="6" cy="3" r="1" fill="#fff"/></svg>
                <svg width="14" height="13" viewBox="0 0 13 12" class="ml-[9px]"><path d="M1 1 H11 V5 M1 1 V11 H6 M3 4 H9" fill="none" stroke="#2f6d9f"/><path d="M4 8 H12 M8 4 V12" stroke="#1e5f95" stroke-width="1.800"/></svg>
              </div>
              <div class="h-[18px] bg-white mr-[4px] text-[#666] pl-[4px] pt-[1px] flex flex-col justify-center leading-[8.500px]">
                <div class="h-[8.500px] -ml-[2px] pl-[2px]">NEUTRAL KATALOG</div>
                <div class="h-[8.500px] bg-[#dedede] -ml-[2px] pl-[2px] mr-[1px]">NOBILIA K CZ</div>
              </div>
              <div class="h-[16px] flex items-center text-[#777] pr-[4px]">
                <span class="w-[82px]">Seznam artiklů:</span>
                <div class="w-[15px] h-[13px] bg-white border border-[#ddd] flex items-center justify-center"><svg width="10" height="8" viewBox="0 0 10 8"><path d="M1 7 L2.500 1 H4 V7Z M9 7 L7.500 1 H6 V7Z M4 3 H6" fill="#333" stroke="#333" stroke-width="0.500"/></svg></div>
                <div class="w-[8px] h-[8px] border border-[#bbb] bg-white ml-[3px]"></div>
                <span class="ml-[2px] text-[#555]">Najít artikl</span>
                <div class="w-[8px] h-[8px] border border-[#bbb] bg-white ml-auto"></div>
                <span class="ml-[2px] mr-[10px] text-[#555]">QuickClick</span>
              </div>
              <div class="h-[73px] bg-white mr-[4px] flex overflow-hidden text-[#666]">
                <div class="flex-1 pl-[4px] pt-[3px] leading-[8.600px] whitespace-nowrap">
                  <div class="flex"><span class="w-[85px]">14318</span><span>Příplatek za vybavení</span></div>
                  <div class="flex"><span class="w-[85px]">14422</span><span>Sada sifonu pro úsporu místa -</span></div>
                  <div class="flex"><span class="w-[85px]">14450</span><span>Nízkotlaká jednopáková</span></div>
                  <div class="flex"><span class="w-[85px]">14454</span><span>Vysokotlaká jednopáková</span></div>
                  <div class="flex"><span class="w-[85px]">17105</span><span>Nízkotlaká jednopáková</span></div>
                  <div class="flex"><span class="w-[85px]">17107</span><span>Nízkotlaká jednopáková</span></div>
                  <div class="flex"><span class="w-[85px]">17111</span><span>Vysokotlaká jednopáková</span></div>
                  <div class="flex"><span class="w-[85px]">17113</span><span>Vysokotlaká jednopáková</span></div>
                  <div class="flex"><span class="w-[85px]">17122</span><span>Vysokotlaká jednopáková</span></div>
                </div>
                <div class="w-[11px] bg-[#f3f3f3] flex flex-col items-center">
                  <svg width="7" height="11" viewBox="0 0 7 11"><path d="M1 6.500 L3.500 4 L6 6.500" fill="none" stroke="#555"/></svg>
                  <div class="w-[10px] h-[11px] bg-[#cdcdcd]"></div>
                  <svg width="7" height="11" viewBox="0 0 7 11" class="mt-auto"><path d="M1 4.500 L3.500 7 L6 4.500" fill="none" stroke="#555"/></svg>
                </div>
              </div>
              <div class="flex items-end h-[15px] text-[#666] pb-[1px] whitespace-nowrap">
                <span class="w-[31px]">Množství</span>
                <div class="w-[11px] h-[11px] bg-white border border-[#ddd] flex items-center justify-center text-[6px] text-[#333] mb-[-1px]">▶</div>
                <span class="ml-[2px]">Číslo artiklu:</span>
              </div>
              <div class="flex h-[13px] gap-[3px]">
                <div class="w-[29px] bg-[#dcdcdc] text-right pr-[2px] flex items-center justify-end text-[#888]">0.00</div>
                <div class="w-[126px] bg-white border border-[#ccc]"></div>
              </div>
              <div class="flex items-end h-[10px] text-[#666] pb-[1px]">
                <span class="w-[32px]">Šířka</span><span class="w-[32px]">Hloubka</span><span>Výška</span>
              </div>
              <div class="flex h-[13px] gap-[3px] text-[#888]">
                <div class="w-[29px] bg-[#dcdcdc] flex items-center justify-end pr-[2px]">0</div>
                <div class="w-[29px] bg-[#dcdcdc] flex items-center justify-end pr-[2px]">0</div>
                <div class="w-[30px] bg-[#dcdcdc] flex items-center justify-end pr-[2px]">0</div>
              </div>
              <div class="flex">
                <div class="w-[158px]">
                  <div class="flex items-end h-[9px] text-[#666]"><span class="w-[31px]">Str.</span><span>Číslo EDV</span></div>
                  <div class="flex h-[13px] gap-[2px]"><div class="w-[29px] bg-[#dcdcdc]"></div><div class="w-[127px] bg-[#dcdcdc]"></div></div>
                </div>
                <div class="ml-[8px] pt-[3px] flex flex-col text-[#666]">
                  <div class="flex items-center gap-[2px] h-[11px]"><div class="w-[8px] h-[8px] bg-white border border-[#bbb]"></div><span><u>S</u>ubpozice</span></div>
                  <div class="flex items-center gap-[2px] h-[11px] text-[#bbb]"><div class="w-[8px] h-[8px] bg-[#eee] border border-[#ccc]"></div><span><u>O</u>bchodní</span></div>
                  <div class="flex items-center gap-[2px] h-[10px] text-[#bbb]"><div class="w-[8px] h-[8px] bg-[#eee] border border-[#ccc]"></div><span><u>G</u>rafický</span></div>
                </div>
              </div>
            </div>
          </div>
          <div class="flex justify-end gap-[3px] pr-[9px] mt-[2px]">
            <div class="w-[54px] h-[15px] bg-[#f7f7f7] border border-[#ddd] flex items-center justify-center text-[#bbb]"><span><u>P</u>oužít</span></div>
            <div class="w-[54px] h-[15px] bg-[#f7f7f7] border border-[#ddd] flex items-center justify-center text-[#bbb]"><span><u>S</u>torno</span></div>
            <div class="w-[57px] h-[15px] bg-white border border-[#ddd] flex items-center text-[#666]"><span class="w-[42px] text-center">Vzhled</span><span class="border-l border-[#aaa] h-full pl-[3px] flex items-center text-[6px]">▼</span></div>
          </div>
        </div>
      </div>
    </div>
  </div>

  <!-- status bar -->
  <div class="h-[11px] bg-[#f0f0f0] flex items-center text-[#666] pl-[758px] whitespace-nowrap">
    <span class="w-[34px]">Korpus</span><span class="w-[49px]">Měna: CZK</span><span class="w-[63px]">ROBERT / Bob</span><span class="w-[37px]">#113863</span><span class="w-[50px]">V2017.3.2.0</span><span>UF NUM</span>
  </div>

  <!-- Hodnoty floating panel -->
  <div class="absolute left-[848px] top-[14px] w-[82px] h-[104px] bg-[#f0f0f0] shadow-[0_1px_3px_rgba(0,0,0,0.5)] z-10">
    <div class="h-[22px] flex items-center pl-[4px] pt-[1px]">
      <span class="text-[14px] text-[#555] font-['Open_Sans',sans-serif] whitespace-nowrap">Hodnoty ...</span>
      <svg width="7" height="7" viewBox="0 0 7 7" class="ml-auto mr-[5px]"><path d="M1 1 L6 6 M6 1 L1 6" stroke="#888"/></svg>
    </div>
    <div class="bg-white mx-[2px] h-[80px] pl-[4px] text-[#444] font-['Liberation_Sans',sans-serif] text-[8px]">
      <div class="h-[13px] flex items-center border-b border-[#f3f3f3]"><span class="w-[33px]">HV2</span><span class="w-[21px] text-right">394</span></div>
      <div class="h-[13px] flex items-center border-b border-[#f3f3f3]"><span class="w-[33px]">HV2</span><span class="w-[21px] text-right">12</span></div>
      <div class="h-[13px] flex items-center border-b border-[#f3f3f3] text-[#61c7a3]"><span class="w-[33px]">SUM</span><span class="w-[21px] text-right">3781</span></div>
      <div class="h-[13px] flex items-center text-[#cf5bd0]"><span class="w-[33px]">P/N</span><span class="w-[21px] text-right">1.14</span></div>
    </div>
  </div>
</div>
</body>
</html>
